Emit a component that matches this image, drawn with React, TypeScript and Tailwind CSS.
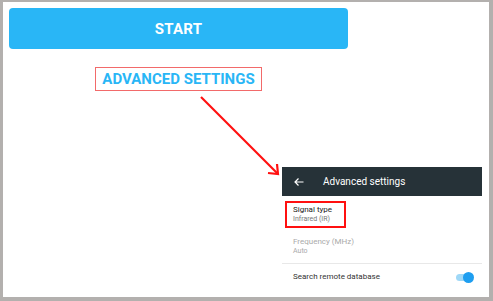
import React from "react";

export default function App() {
  return (
    <div className="w-[493px] h-[301px] bg-[#b3b0ae] pt-[2px] pl-[3px] pr-[4px] pb-[4px]" style={{ fontFamily: "Roboto, 'Liberation Sans', sans-serif" }}>
      <div className="relative w-full h-full bg-white overflow-hidden">
        <div className="pl-[6px] pt-[6px] w-[345px]">
          <div className="h-[41px] rounded-[4px] bg-[#29b6f6] flex items-center justify-center text-white font-bold text-[15px] tracking-[0.2px] pt-[2px]">
            START
          </div>
        </div>
        <div className="ml-[92px] mt-[18px] w-[167px] h-[24px] border border-[#f26a6a] flex items-center justify-center text-[#29b6f6] font-bold text-[15px] leading-none">
          ADVANCED SETTINGS
        </div>
        <svg className="absolute left-0 top-0" width="486" height="295" viewBox="0 0 486 295">
          <line x1="198" y1="95" x2="274" y2="171" stroke="#ff1010" strokeWidth="2.2" />
          <polyline points="265,171 275,172 274,162" fill="none" stroke="#ff1010" strokeWidth="2.2" />
        </svg>
        <div className="absolute left-[279px] top-[165px] w-[200px]">
          <div className="h-[29px] bg-[#263238] flex items-center text-white">
            <svg width="12" height="12" viewBox="0 0 24 24" className="ml-[11px]" fill="none" stroke="white" strokeWidth="2.4">
              <path d="M21 12H4M11 5l-7 7 7 7" />
            </svg>
            <span className="ml-[18px] text-[10px]">Advanced settings</span>
          </div>
          <div className="ml-[3px] mt-[5px] w-[61px] h-[27px] border-2 border-[#ff1010] pl-[6px] pt-[3px] leading-none">
            <div className="text-[8px] text-[#222]">Signal type</div>
            <div className="text-[7px] text-[#777] mt-[2px]">Infrared (IR)</div>
          </div>
          <div className="ml-[11px] mt-[10px] leading-none">
            <div className="text-[8px] text-[#aaa]">Frequency (MHz)</div>
            <div className="text-[7px] text-[#aaa] mt-[2px]">Auto</div>
          </div>
          <div className="mt-[8px] h-px bg-[#e8e8e8]" />
          <div className="flex items-center justify-between h-[26px] pl-[11px] pr-[8px]">
            <span className="text-[8px] text-[#333]">Search remote database</span>
            <div className="relative w-[18px] h-[11px] flex items-center">
              <div className="w-[16px] h-[7px] rounded-full bg-[#9fd8f7]" />
              <div className="absolute right-0 w-[11px] h-[11px] rounded-full bg-[#1e9ef0]" />
            </div>
          </div>
        </div>
      </div>
    </div>
  );
}
